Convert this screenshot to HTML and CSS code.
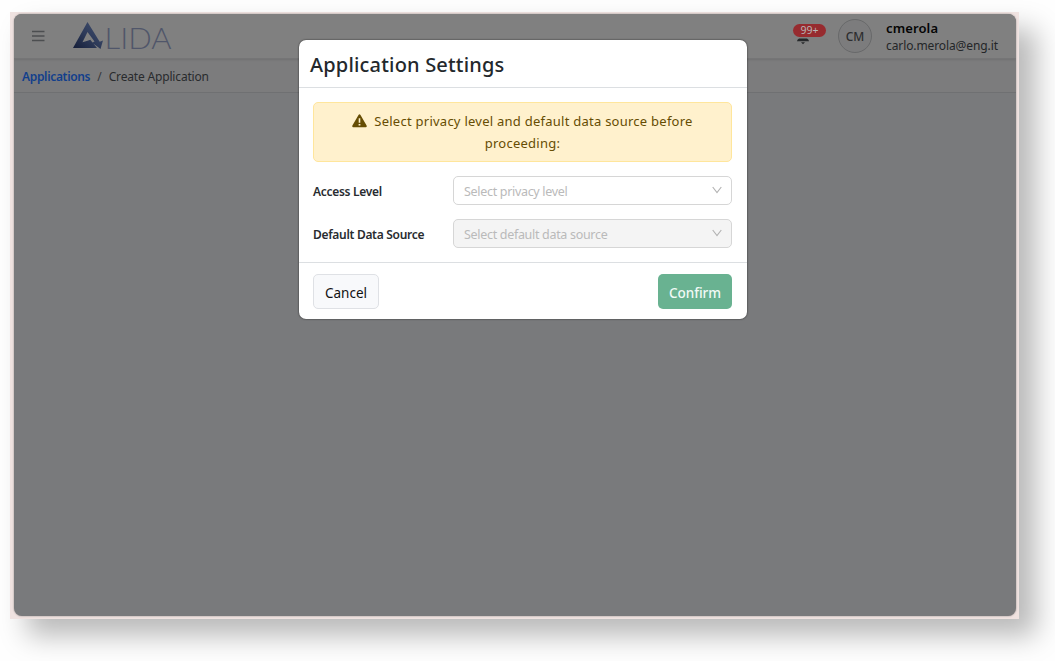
FILE: index.html
```html
<!DOCTYPE html>
<html lang="en">
<head>
<meta charset="utf-8">
<title>Application Settings</title>
<link rel="stylesheet" href="styles.css">
</head>
<body>
<div class="frame">
  <div class="screen">
    <header class="topbar">
      <svg class="burger" width="14" height="12" viewBox="0 0 14 12"><path d="M1 1.500h12.500M1 6h12.500M1 10.500h12.500" stroke="#4c4e50" stroke-width="1.300"/></svg>
      <svg class="logo" width="102" height="32" viewBox="0 0 102 32">
        <defs><linearGradient id="lg" x1="0" y1="1" x2="1" y2="0"><stop offset="0" stop-color="#141d38"/><stop offset=".5" stop-color="#2e3b5a"/><stop offset="1" stop-color="#435170"/></linearGradient></defs>
        <path fill="url(#lg)" d="M15.500 1L1 27H25L18.300 18.800L15.500 19.800L10.500 21.300L15.500 11L22.500 20.500L20.300 21.800L28.500 28L31 19.500L27.700 20.700Z"/>
        <text class="logo-text" x="32.500" y="27.500" textLength="67" lengthAdjust="spacingAndGlyphs">LIDA</text>
      </svg>
      <div class="bell">
        <svg width="14" height="16" viewBox="0 0 14 16"><path d="M1 12.300Q1 10.500 3 9.500H11Q13 10.500 13 12.300zM5 13.300h4L7 15.300z" fill="#26282a"/></svg>
        <span class="badge">99+</span>
      </div>
      <div class="avatar">CM</div>
      <div class="user">
        <span class="name">cmerola</span>
        <span class="mail">carlo.merola@eng.it</span>
      </div>
    </header>
    <nav class="crumbs"><a class="crumb-link">Applications</a><span class="slash">/</span><span class="crumb">Create Application</span></nav>
  </div>
  <section class="modal">
    <div class="modal-head"><h1 class="title">Application Settings</h1></div>
    <div class="modal-body">
      <div class="alert">
        <div class="alert-line"><svg class="warn" width="15" height="14" viewBox="0 0 15 14"><path fill="#664d03" fill-rule="evenodd" d="M6.500 1Q7.500 -.3 8.500 1L14.600 11.500Q15.200 13.200 13.700 13.300H1.300Q-.2 13.200.4 11.500ZM6.700 4.300V8.700H8.300V4.300ZM6.600 9.900V11.500H8.400V9.900Z"/></svg><span>Select privacy level and default data source before</span></div>
        <div class="alert-line">proceeding:</div>
      </div>
      <div class="row"><label class="label">Access Level</label><div class="select"><span>Select privacy level</span><svg width="10" height="8" viewBox="0 0 10 8"><path d="M.7 1L5 6.700L9.300 1" fill="none" stroke="#b2b2b2" stroke-width="1.100"/></svg></div></div>
      <div class="row"><label class="label">Default Data Source</label><div class="select disabled"><span>Select default data source</span><svg width="10" height="8" viewBox="0 0 10 8"><path d="M.7 1L5 6.700L9.300 1" fill="none" stroke="#b2b2b2" stroke-width="1.100"/></svg></div></div>
    </div>
    <div class="modal-foot"><button class="btn cancel">Cancel</button><button class="btn confirm">Confirm</button></div>
  </section>
</div>
</body>
</html>
```

FILE: styles.css
```css
* { box-sizing: border-box; }
body { margin: 0; width: 1055px; height: 661px; padding: 12px 0 0 10px; overflow: hidden; background: #fefefe; font-family: "Noto Sans", "Open Sans", sans-serif; }
.frame { position: relative; width: 1009px; height: 607px; padding: 2px 3px 3px 4px; background: #efe2e0; box-shadow: 17px 17px 26px 0 rgba(0,0,0,.27); }
.screen { width: 1002px; height: 602px; border-radius: 8px; overflow: hidden; background: #797a7c; box-shadow: 0 0 2px rgba(0,0,0,.4); }
.topbar { height: 45px; display: flex; align-items: center; background: #808080; border-bottom: 1px solid #757576; box-shadow: 0 1px 2px rgba(0,0,0,.1); position: relative; }
.burger { margin-left: 17px; }
.logo { margin-left: 27px; margin-top: 2px; }
.logo-text { font-family: Lato, sans-serif; font-weight: 300; font-size: 29px; fill: #50566a; }
.bell { position: relative; width: 14px; height: 16px; margin: 2px 28px 0 auto; }
.bell svg { display: block; }
.badge { position: absolute; left: -3px; top: -5px; width: 33px; height: 13px; border-radius: 7px; background: #972b2f; color: #b8b5b5; font-size: 10.5px; line-height: 13px; text-align: center; }
.avatar { width: 34px; height: 34px; border: 1px solid #68696a; border-radius: 50%; background: #7c7c7d; color: #2c2d2f; font-size: 12px; font-weight: 500; line-height: 34px; text-align: center; }
.user { width: 130px; margin-left: 14px; padding-top: 2px; display: flex; flex-direction: column; font-size: 13px; line-height: 17px; white-space: nowrap; }
.name { color: #050505; font-weight: 600; letter-spacing: .12px; }
.mail { color: #242628; font-size: 12px; letter-spacing: -.1px; }
.crumbs { height: 34px; display: flex; align-items: center; padding: 2px 0 0 8px; background: #7c7c7d; border-bottom: 1px solid #6f7072; font-size: 12px; white-space: nowrap; }
.crumb-link { color: #123f8c; font-weight: 600; letter-spacing: -.33px; }
.slash { margin: 0 7px; color: #35373a; }
.crumb { color: #292b2d; letter-spacing: -.17px; }
.modal { position: absolute; left: 289px; top: 28px; width: 448px; height: 279px; border-radius: 7px; background: #fff; box-shadow: 0 0 2px rgba(0,0,0,.75); display: flex; flex-direction: column; }
.modal-head { height: 48px; border-bottom: 1px solid #dcdfe2; padding: 2px 11px 0; display: flex; align-items: center; }
.title { margin: 0; font-size: 20px; font-weight: 500; line-height: 28px; letter-spacing: .18px; color: #24282c; white-space: nowrap; }
.modal-body { flex: 1; padding: 14px 15px 0 14px; display: flex; flex-direction: column; gap: 14px; }
.alert { height: 60px; padding: 7px 0; border: 1px solid #ffe69c; border-radius: 5px; background: #fff1cd; color: #664d03; font-size: 13px; letter-spacing: .25px; line-height: 22px; }
.alert-line { display: flex; justify-content: center; align-items: center; gap: 7px; white-space: nowrap; }
.row { display: flex; align-items: center; height: 29px; }
.label { width: 140px; padding-top: 2px; font-size: 12px; letter-spacing: -.3px; font-weight: 600; color: #282c30; white-space: nowrap; }
.select { width: 279px; height: 29px; padding: 0 9px 0 10px; border: 1px solid #d6d6d6; border-radius: 5px; display: flex; align-items: center; justify-content: space-between; color: #bababa; font-size: 12.5px; letter-spacing: -.31px; background: #fff; white-space: nowrap; }
.select span { padding-top: 2px; }
.select svg { margin-bottom: 1px; }
.disabled { background: #f4f4f4; }
.modal-foot { height: 57px; padding: 11px 15px 0 14px; border-top: 1px solid #dcdfe2; display: flex; justify-content: space-between; }
.btn { height: 35px; padding: 2px 0 0; border-radius: 5px; font-family: inherit; font-size: 13.5px; }
.cancel { width: 66px; border: 1px solid #dfe1e5; background: #f8f9fb; color: #111; }
.confirm { width: 74px; border: 0; background: #69b291; color: #f2faf6; font-weight: 500; }
```
